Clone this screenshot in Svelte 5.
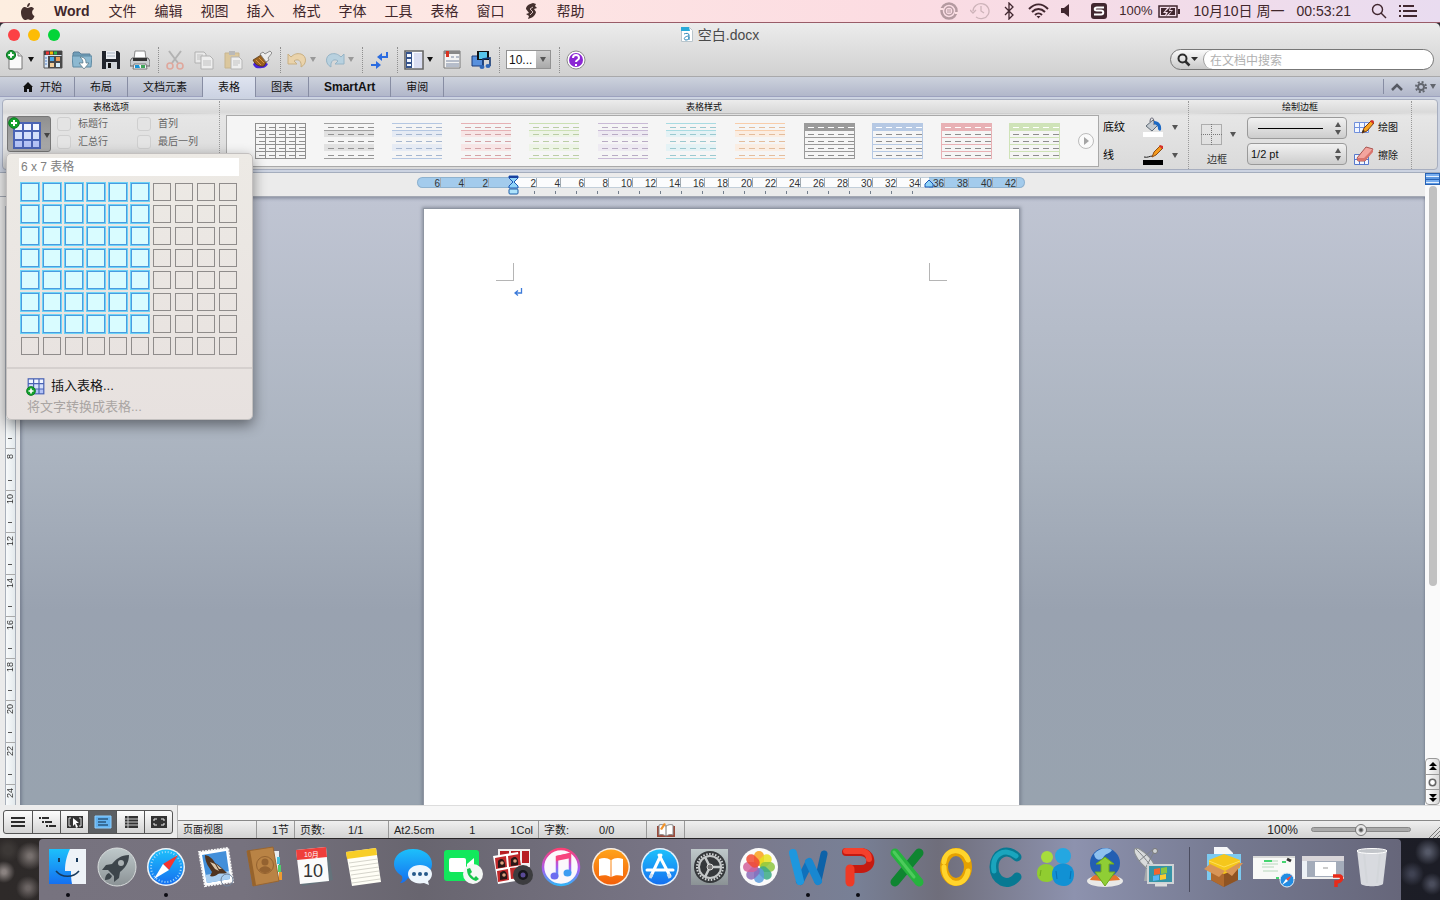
<script>
  const menus = ['文件', '编辑', '视图', '插入', '格式', '字体', '工具', '表格', '窗口'];
  const tabs = ['开始', '布局', '文档元素', '表格', '图表', 'SmartArt', '审阅'];
  const options = ['标题行', '首列', '汇总行', '最后一列'];

  const styles = [
    { kind: 'grid', line: '#8f8f8f', band: 'none' },
    { kind: 'band', line: '#a0a0a0', band: '#e1e1e1' },
    { kind: 'band', line: '#b4c7e2', band: '#e6ebf4' },
    { kind: 'band', line: '#e6b1b4', band: '#f7e6e6' },
    { kind: 'band', line: '#cbe0b3', band: '#edf4e6' },
    { kind: 'band', line: '#c9bad6', band: '#eeeaf2' },
    { kind: 'band', line: '#a8dbe2', band: '#e4f2f5' },
    { kind: 'band', line: '#f8cdaa', band: '#faede2' },
    { kind: 'head', line: '#9b9b9b', band: '#9b9b9b' },
    { kind: 'head', line: '#b6c9e4', band: '#b6c9e4' },
    { kind: 'head', line: '#e8b1b5', band: '#e8b1b5' },
    { kind: 'head', line: '#cfe3b8', band: '#cfe3b8' }
  ];

  const rulerMarks = Array.from({ length: 25 }, (_, i) => (i - 3) * 2);
  const sideMarks = Array.from({ length: 13 }, (_, i) => i * 2);

  const apps = [
    'finder', 'launchpad', 'safari', 'mail', 'contacts', 'calendar', 'notes', 'messages', 'facetime',
    'photobooth', 'itunes', 'ibooks', 'appstore', 'settings', 'photos', 'word', 'powerpoint', 'excel',
    'outlook', 'communicator', 'messenger', 'docconn', 'rdc'
  ];
  const stacks = ['downloads', 'win-safari', 'win-ppt', 'trash'];
  const running = ['finder', 'safari', 'word', 'powerpoint'];
  const petals = ['#f9a01b', '#e6e01c', '#8dc63f', '#3aa984', '#5b9bdb', '#8a6bb8', '#d1609a', '#f04a32'];
  const views = ['draft', 'outline', 'publish', 'print', 'notebook', 'full'];

  let cols = $state(6);
  let rows = $state(7);
  let activeTab = $state('表格');
  let activeView = $state('print');
  let zoom = $state(50);
</script>

{#snippet arrow()}
  <svg class="arrow" width="6" height="5" viewBox="0 0 6 5"><path d="M0 0h6L3 5z" fill="currentColor" /></svg>
{/snippet}

{#snippet tool(name)}
  <svg width="20" height="20" viewBox="0 0 20 20" fill="none">
    {#if name === 'new'}
      <path d="M4 2h9l4 4v13H4z" fill="#fafafa" stroke="#777" />
      <path d="M13 2v4h4" fill="#ddd" stroke="#888" />
      <circle cx="6" cy="5" r="4.6" fill="#1b9a36" stroke="#0b7422" />
      <path d="M6 2.3v5.4M3.3 5h5.4" stroke="#fff" stroke-width="2" />
    {:else if name === 'gallery'}
      <path d="M1 1h18v17H1z" fill="#d9e6f5" stroke="#555" />
      <path d="M1 1h18v4H1z" fill="#444" />
      <path d="M3 3h3" stroke="#e33" stroke-width="3" /><path d="M7 3h3" stroke="#f6b400" stroke-width="3" /><path d="M11 3h3" stroke="#2db84b" stroke-width="3" />
      <path d="M5 6h14v12H5z" fill="#4a4a4a" />
      <path d="M7 7h4v4H7z" fill="#49a7e8" /><path d="M13 7h4v4h-4z" fill="#e99a55" />
      <path d="M7 13h4v4H7z" fill="#f2cf9c" /><path d="M13 13h4v4h-4z" fill="#d5eefc" />
      <path d="M2 8h2M2 11h2M2 14h2" stroke="#5b86c8" />
    {:else if name === 'open'}
      <path d="M1 3l1-1h5l2 2h9v3H1z" fill="#6f9db8" stroke="#5b7f98" />
      <path d="M0 6h20l-1 11H1z" fill="#8db9d1" stroke="#5f8aa3" />
      <path d="M8 7c5 0 6 3 6 6h3l-5 6-5-6h4c0-3-1-4-3-6z" fill="#fff" stroke="#54717f" stroke-width=".7" />
    {:else if name === 'save'}
      <path d="M1 1h16l2 2v16H1z" fill="#20242c" />
      <path d="M5 1h10v8H5z" fill="#eceff3" /><path d="M6 3h8M6 6h8" stroke="#a8b4c4" />
      <path d="M5 12h11v7H5z" fill="#cfd4da" /><path d="M7 13h3v5H7z" fill="#111" />
    {:else if name === 'printer'}
      <path d="M5 1h10l1 8H4z" fill="#fff" stroke="#888" />
      <path d="M2 8h16l2 3v5H0v-5z" fill="#c9ccd0" stroke="#666" /><path d="M3 8h14v3H3z" fill="#333" />
      <path d="M4 14h12l1 5H3z" fill="#f4f8fb" stroke="#777" /><path d="M5 15h4l1 3H5z" fill="#1793d6" /><path d="M11 15h4v3h-4z" fill="#3fa55a" />
    {:else if name === 'cut'}
      <path d="M4 1l9 12M16 1L7 13" stroke="#b3b3b3" stroke-width="2" />
      <circle cx="5" cy="16" r="3" stroke="#dfa79c" stroke-width="1.6" /><circle cx="15" cy="16" r="3" stroke="#dfa79c" stroke-width="1.6" />
    {:else if name === 'copy'}
      <path d="M1 2h9l2 2v9H1z" fill="#e9e9e9" stroke="#b1b1b1" /><path d="M3 5h6M3 7h6M3 9h4" stroke="#c0c0c0" />
      <path d="M7 6h9l3 3v10H7z" fill="#eee" stroke="#b1b1b1" /><path d="M9 11h8M9 13h8M9 15h8" stroke="#c0c0c0" />
    {:else if name === 'paste'}
      <path d="M2 3h14v15H2z" fill="#dbc79d" stroke="#c7b58f" /><path d="M6 1h6v4H6z" fill="#b9b9b9" />
      <path d="M8 7h8l3 3v9H8z" fill="#eee" stroke="#b5b5b5" /><path d="M10 11h7M10 13h7M10 15h5" stroke="#c3c3c3" />
    {:else if name === 'brush'}
      <path d="M1 14c1 4 5 5 9 4 3 0 5-2 6-4-5-3-9-5-15 0z" fill="#4824d8" />
      <path d="M1 10l8-5 6 6-3 5C8 17 3 15 1 10z" fill="#9a6220" stroke="#4c2d0b" stroke-width=".7" /><path d="M4 10l5 5M7 8l5 5" stroke="#d9983f" />
      <path d="M8 4l3-2 2 2 5-3 2 2-4 5 1 2-3 2z" fill="#ececec" stroke="#777" stroke-width=".8" />
    {:else if name === 'undo'}
      <path d="M1 4v10h9l-3-3c4-3 8 0 7 6 6-3 6-11 0-13-4-1-7 0-10 3z" fill="#ead3ab" stroke="#c9b083" />
    {:else if name === 'redo'}
      <path d="M19 4v10h-9l3-3c-4-3-8 0-7 6-6-3-6-11 0-13 4-1 7 0 10 3z" fill="#b8d1df" stroke="#96b4c6" />
    {:else if name === 'marks'}
      <path d="M18 2v5h-5M2 15h5" stroke="#2c6ce0" stroke-width="2" /><path d="M7 11l5 4-5 4zM13 3L8 7l5 4z" fill="#2c6ce0" />
    {:else if name === 'sidebar'}
      <path d="M1 1h18v18H1z" fill="#f7f9ff" stroke="#666" stroke-width="1.6" /><path d="M2 2h6v16H2z" fill="#35538c" /><path d="M3 4h4v3H3zM3 9h4v3H3zM3 14h4v2H3z" fill="#f5f8ff" /><path d="M10 3h8v15h-8z" fill="#dadef2" />
    {:else if name === 'toolbox'}
      <path d="M2 1h16v17H2z" fill="#f3f3f3" stroke="#777" /><path d="M2 1h16v3H2z" fill="#888" /><path d="M4 1h3v6H4z" fill="#d9321f" />
      <path d="M9 7h3M14 7h3M4 11h13M4 14h13M4 16h13" stroke="#7886a0" />
    {:else if name === 'media'}
      <path d="M1 6h11v10H1z" fill="#5890dd" stroke="#1b3b7a" /><path d="M6 1h12v9H6z" fill="#111" /><path d="M8 2h8v7H8z" fill="#56c4ea" />
      <path d="M12 17V9l7-1v8" stroke="#163a74" stroke-width="1.6" /><ellipse cx="11" cy="17" rx="2.5" ry="2" fill="#2f67b8" /><ellipse cx="17" cy="16" rx="2.5" ry="2" fill="#2f67b8" />
    {:else if name === 'help'}
      <circle cx="10" cy="10" r="9" fill="#fff" stroke="#8d8d8d" /><circle cx="10" cy="10" r="7" fill="#8b27d4" />
      <path d="M7 8c0-4 6-4 6 0 0 2-3 2-3 4M10 14v2" stroke="#fff" stroke-width="2" />
    {/if}
  </svg>
{/snippet}

{#snippet toolButton(name, label, off = false)}
  <button class="tool" aria-label={label} disabled={off}>{@render tool(name)}</button>
{/snippet}

{#snippet dropTool(name, label, off = false)}
  <button class="tool drop" aria-label={label} disabled={off}>{@render tool(name)}{@render arrow()}</button>
{/snippet}

{#snippet tableIcon(size)}
  <svg width={size} height={size} viewBox="0 0 30 30">
    <path d="M1 2h28v27H1z" fill="#4a63b4" />
    <path d="M3 4h7v6H3zM12 4h7v6h-7zM21 4h6v6h-6z" fill="#f1f5ff" />
    <path d="M3 12h7v7H3zM12 12h7v7h-7zM21 12h6v7h-6z" fill="#d5e0fb" />
    <path d="M3 21h7v6H3zM12 21h7v6h-7zM21 21h6v6h-6z" fill="#b4c3f6" />
  </svg>
{/snippet}

{#snippet plus()}
  <svg class="plus" width="12" height="12" viewBox="0 0 12 12">
    <circle cx="6" cy="6" r="5.3" fill="#12a02c" stroke="#087a1c" /><path d="M6 3v6M3 6h6" stroke="#fff" stroke-width="2" />
  </svg>
{/snippet}

{#snippet thumb(s)}
  <svg width="51" height="36" viewBox="0 0 51 36" fill="none" shape-rendering="crispEdges">
    {#if s.kind === 'grid'}
      <path d="M.5.5h50v35H.5zM0 7.5h51M0 14.5h51M0 21.5h51M0 28.5h51M10.5 0v36M20.5 0v36M30.5 0v36M40.5 0v36" stroke={s.line} />
      <path d="M4 4.5h47M4 11.5h47M4 18.5h47M4 25.5h47M4 32.5h47" stroke={s.line} stroke-dasharray="6 4" />
    {:else if s.kind === 'band'}
      <path d="M0 7h50v7H0zM0 21h50v7H0z" fill={s.band} />
      <path d="M0 .5h50M0 7.5h50M0 35.5h50" stroke={s.line} />
      <path class="dash" d="M4 4.5h46M4 11.5h46M4 18.5h46M4 25.5h46M4 32.5h46" stroke={s.line} stroke-dasharray="6 4" />
    {:else}
      <path d="M.5.5h50v35H.5zM0 14.5h51M0 21.5h51M0 28.5h51" stroke={s.line} />
      <path d="M0 0h51v8H0z" fill={s.band} />
      <path d="M4 4.5h47" stroke="#fff" stroke-dasharray="6 4" />
      <path d="M4 11.5h46M4 18.5h46M4 25.5h46M4 32.5h46" stroke="#8e8e8e" stroke-dasharray="6 4" />
    {/if}
  </svg>
{/snippet}

{#snippet viewIcon(name)}
  <svg width="18" height="14" viewBox="0 0 18 14" fill="none" stroke="#2c2c2c" stroke-width="2">
    {#if name === 'draft'}
      <path d="M2 3h14M2 7h14M2 11h14" />
    {:else if name === 'outline'}
      <path d="M1 3h2M4 3h7M4 7h2M7 7h7M8 11h2M11 11h7" />
    {:else if name === 'publish'}
      <path d="M1 1h16v12H1z" fill="#333" stroke="none" /><path d="M5 3H3v8h2M13 3h2v8h-2" stroke="#ddd" stroke-width="1" /><path d="M7 3l6 5H10l2 4-2 1-1-4-2 2z" fill="#fff" stroke="none" />
    {:else if name === 'print'}
      <path d="M1 1h16v12H1z" fill="#62b2f0" stroke="#8fd0ff" stroke-width="1" /><path d="M4 4h10M4 7h8M4 10h10" stroke="#0f2942" stroke-width="1" />
    {:else if name === 'notebook'}
      <path d="M3 1h13v12H3z" fill="#333" stroke="none" /><path d="M2 4h14M2 7h14M2 10h14M6 1v12" stroke="#ccc" stroke-width="1" />
    {:else}
      <path d="M1 1h16v12H1z" fill="#333" stroke="none" /><path d="M4 6V4h3M11 4h3v2M14 8v2h-3M7 10H4V8" stroke="#eee" stroke-width="1" />
    {/if}
  </svg>
{/snippet}

{#snippet app(name)}
  <svg width="40" height="40" viewBox="0 0 40 40" fill="none">
    {#if name === 'finder'}
      <rect x="1" y="2" width="37" height="35" fill="url(#blue)" />
      <path d="M22 2h16v35H24c-1-5-1-8-1-13h-6c0-9 2-16 5-22z" fill="#eef3f8" />
      <path d="M11 11v4M29 11v4" stroke="#173a5c" stroke-width="2" /><path d="M8 24c6 7 17 7 23 0" stroke="#173a5c" stroke-width="1.6" />
    {:else if name === 'launchpad'}
      <circle cx="20" cy="20" r="19" fill="url(#steel)" stroke="#d9dddd" />
      <path d="M32 8c-8 0-13 4-17 9l-6 1-4 5 6 0 6 6 0 6 5-4 1-6c5-4 9-9 9-17zM12 26c-3 1-4 4-4 7 3 0 6-1 7-4z" fill="#3d454b" />
      <circle cx="24" cy="16" r="3" fill="#aab1b3" />
    {:else if name === 'safari'}
      <circle cx="20" cy="20" r="19" fill="#f2f5f8" /><circle cx="20" cy="20" r="17.5" fill="url(#blue)" />
      <circle cx="20" cy="20" r="15" stroke="#9ed6fb" stroke-width="2" stroke-dasharray="1 2" />
      <path d="M32 8L17 17l6 6z" fill="#f5342e" /><path d="M8 32l9-15 6 6z" fill="#fff" />
    {:else if name === 'mail'}
      <path d="M3 5l29-4 5 34-28 4z" fill="#fff" stroke="#f5f5f5" stroke-width="2" stroke-dasharray="2 1" />
      <path d="M6 8l24-4 4 28-23 4z" fill="#438fd9" /><path d="M9 28l24-4 1 8-23 4z" fill="#a9cef0" />
      <path d="M9 8c5 1 8 4 10 8 4 2 8 6 12 10-4 1-7 0-9 1-2 2-6 3-8 2l2-4c-3-5-7-9-7-17z" fill="#4f3420" /><path d="M14 15l5 2 4 7-4-2zM20 17l6 5-3 0z" fill="#dac7aa" /><circle cx="31" cy="33" r="6" stroke="#70829a" />
    {:else if name === 'contacts'}
      <path d="M28 4h6v28h-6z" fill="#e9edf0" /><path d="M32 10h3v7h-3z" fill="#49bfd9" /><path d="M33 18h3v7h-3z" fill="#4fce6e" /><path d="M34 25h3v8h-3z" fill="#ef9b32" />
      <path d="M2 4L28 0l6 34-26 5z" fill="#b98345" stroke="#996631" /><path d="M2 4l3-1 6 35-3 1z" fill="#96632c" />
      <circle cx="20" cy="18" r="8.5" stroke="#946230" /><circle cx="20" cy="15" r="3.5" fill="#946230" /><path d="M14 23c2-5 10-5 12 0-4 4-8 4-12 0z" fill="#946230" />
    {:else if name === 'calendar'}
      <path d="M3 6l30-4 5 31-31 6z" fill="#64737b" /><path d="M1 3l30-3 3 34-29 3z" fill="#fbfbfb" /><path d="M1 3l30-3 1 10L2 13z" fill="#ef3e3b" />
      <text x="9" y="10" font-size="7" fill="#fff">10月</text><text x="8" y="30" font-size="18" fill="#333">10</text>
    {:else if name === 'notes'}
      <path d="M2 5l30-4 5 34-29 4z" fill="#fffef6" /><path d="M2 5l30-4 1 7L3 12z" fill="#f8ce26" />
      <path d="M5 16l29-4M6 20l28-4M6 24l29-4M7 28l28-4M7 32l29-4M8 36l28-4" stroke="#d6d5cc" />
    {:else if name === 'messages'}
      <path d="M20 2c12 0 19 7 19 15S32 32 20 32c-2 0-4 0-5-1-2 3-5 5-8 5 2-2 3-4 2-7-5-3-8-7-8-12C1 9 8 2 20 2z" fill="url(#blue)" />
      <path d="M27 18c7 0 12 4 12 9 0 3-2 6-4 7l1 4-5-2c-9 2-16-3-16-9 0-5 5-9 12-9z" fill="#eef6fd" />
      <circle cx="21" cy="27" r="2" fill="#265a8b" /><circle cx="27" cy="27" r="2" fill="#265a8b" /><circle cx="33" cy="27" r="2" fill="#265a8b" />
    {:else if name === 'facetime'}
      <rect x="1" y="3" width="35" height="31" rx="3" fill="#12e85c" /><rect x="6" y="11" width="17" height="14" rx="2" fill="#fff" /><path d="M24 17l7-6v14l-7-5z" fill="#fff" />
      <circle cx="30" cy="27" r="10" fill="#f4f7f5" /><path d="M24 22l3-1 2 4-2 2 4 4 2-2 3 3-3 2c-6-2-9-6-9-12z" fill="#17c44b" />
    {:else if name === 'photobooth'}
      <path d="M6 2h32v18H6z" fill="#f1eeee" /><path d="M8 4h9v12H8zM19 4h9v10h-9zM30 4h7v12h-7z" fill="#b71d22" />
      <path d="M1 9l25-4 4 28-24 4z" fill="#fff" /><path d="M3 11l11-2 1 11-11 2zM16 9l11-2 2 11-12 2zM5 24l11-2 1 11-11 2zM18 21l10-1 1 11-10 1z" fill="#c0292b" />
      <path d="M6 14c4-5 8 0 7 6l-7 1zM19 12c5-5 8 0 7 6l-7 1zM8 26c5-5 8 0 7 6l-7 1z" fill="#2a1717" /><circle cx="10" cy="16" r="1.800" fill="#dba07e" /><circle cx="23" cy="14" r="1.800" fill="#dba07e" /><circle cx="12" cy="28" r="1.800" fill="#dba07e" />
      <circle cx="31" cy="28" r="10" fill="#3c3c3f" /><circle cx="31" cy="28" r="5" fill="#17171c" /><circle cx="31" cy="28" r="2.5" fill="#5a4a97" />
    {:else if name === 'itunes'}
      <circle cx="20" cy="20" r="18" fill="#fbf8fc" stroke="url(#tune)" stroke-width="2.5" />
      <path d="M16 30V10l13-3v19" stroke="url(#tune)" stroke-width="2.5" /><path d="M15 9l15-3v5l-15 3z" fill="#f7457e" /><ellipse cx="13.500" cy="29" rx="4" ry="3.500" fill="#6d6df0" /><ellipse cx="26.500" cy="26" rx="4" ry="3.500" fill="#3d9df2" />
    {:else if name === 'ibooks'}
      <circle cx="20" cy="20" r="19" fill="#f7efe7" /><circle cx="20" cy="20" r="17.5" fill="url(#orange)" />
      <path d="M8 12c5-2 9-1 11.500 1v17c-3-2-7-2-11.500-1zM32 12c-5-2-9-1-11.500 1v17c3-2 7-2 11.500-1z" fill="#fff" />
    {:else if name === 'appstore'}
      <circle cx="20" cy="20" r="19" fill="#e6f1fa" /><circle cx="20" cy="20" r="17.5" fill="url(#blue)" />
      <path d="M21 8L11 29M19 8l11 21M7 23h26" stroke="#fff" stroke-width="3" stroke-linecap="round" /><path d="M12 27l-2 4M28 27l2 4" stroke="#cde" stroke-width="3" />
    {:else if name === 'settings'}
      <rect x="1" y="2" width="37" height="36" fill="url(#steel)" /><circle cx="20" cy="20" r="16" fill="#35383b" />
      <circle cx="20" cy="20" r="13" stroke="#d3d6d7" stroke-width="2" stroke-dasharray="1.500 1.500" /><circle cx="20" cy="20" r="11" stroke="#c3c6c7" stroke-width="2" />
      <path d="M20 20h11M20 20l-5-10M20 20l-5 10" stroke="#c5c9ca" stroke-width="2.500" /><circle cx="20" cy="20" r="3" fill="#777" stroke="#ddd" />
    {:else if name === 'photos'}
      <circle cx="20" cy="20" r="19" fill="#fafafa" />
      {#each petals as color, i}
        <rect x="15" y="4" width="10" height="15" rx="5" fill={color} fill-opacity=".85" transform="rotate({i * 45} 20 20)" />
      {/each}
    {:else if name === 'word'}
      <path d="M30 34l6-27" stroke="#0d62a8" stroke-width="7" stroke-linecap="round" /><path d="M12 34l9-18" stroke="#0f70bb" stroke-width="8" stroke-linecap="round" />
      <path d="M21 15l9 19" stroke="#1887d0" stroke-width="8" stroke-linecap="round" /><path d="M5 6l7 28" stroke="#1e97de" stroke-width="8" stroke-linecap="round" />
    {:else if name === 'powerpoint'}
      <path d="M8 5h15c12 1 13 17 0 17h-8" stroke="#c51a10" stroke-width="8" stroke-linecap="round" /><path d="M8 4h16c4 1 7 3 7 8" stroke="#f5402c" stroke-width="6" stroke-linecap="round" /><path d="M12 22v13" stroke="#ee3a25" stroke-width="9" stroke-linecap="round" />
    {:else if name === 'excel'}
      <path d="M32 6L8 35" stroke="#0f8531" stroke-width="9" stroke-linecap="round" /><path d="M8 6l24 29" stroke="#26b33e" stroke-width="9" stroke-linecap="round" /><path d="M7 5l20 25" stroke="#4dcb5c" stroke-width="3" stroke-linecap="round" />
    {:else if name === 'outlook'}
      <ellipse cx="20" cy="20" rx="12" ry="15" stroke="#e5a100" stroke-width="8" /><path d="M8 15C9 1 28 0 32 13M8 20c0 20 21 22 24 4" stroke="#ffd42c" stroke-width="5" stroke-linecap="round" />
    {:else if name === 'communicator'}
      <path d="M31 10C22 0 8 6 8 20s14 21 23 10" stroke="#087992" stroke-width="9" stroke-linecap="round" /><path d="M30 9C19 0 5 7 8 24" stroke="#1aa5bd" stroke-width="5" stroke-linecap="round" />
    {:else if name === 'messenger'}
      <circle cx="12" cy="10" r="6" fill="#a7dd3c" /><path d="M2 26c0-12 18-12 18 0 0 5-3 9-8 9-6 0-10-3-10-9z" fill="#91cd30" /><path d="M5 29l1-6" stroke="#6fa71d" />
      <circle cx="28" cy="9" r="8" fill="#24a7e1" /><path d="M17 27c0-14 22-14 22 0 0 6-3 12-10 12-8 0-12-5-12-12z" fill="#1191d4" /><path d="M22 32l-1-8M35 32l1-8" stroke="#0b6fb0" />
    {:else if name === 'docconn'}
      <ellipse cx="20" cy="34" rx="18" ry="6" fill="#e9e9e7" /><path d="M5 33c2-4 6-6 11-7l2 8zM35 33c-2-4-6-6-11-7l-2 8z" fill="#e3742c" />
      <circle cx="20" cy="16" r="15" fill="#235fb2" /><path d="M9 7c5-6 13-7 18-4-2 4-7 3-9 8-4 3-8 2-9-4z" fill="#8ec1ef" /><path d="M16 25v-8h-5l9-7 9 7h-5v8h6L20 39 10 25z" fill="#8fce35" stroke="#6ea81d" />
    {:else if name === 'rdc'}
      <path d="M12 20l-2 14h10v-3z" fill="#a6a9ab" /><ellipse cx="11" cy="13" rx="5" ry="15" fill="#d9dbdc" stroke="#8b8f92" transform="rotate(-42 11 13)" /><path d="M2 2c4 4 12 12 18 22M5 14l13-11M12 20l8-15" stroke="#7f8386" /><circle cx="21" cy="4" r="2.500" fill="#cfd2d4" stroke="#777" />
      <rect x="13" y="17" width="27" height="20" fill="#cfd3d5" /><rect x="15" y="19" width="23" height="16" fill="#3694a7" />
      <path d="M20 22l6-1v6l-6 1z" fill="#f1652f" /><path d="M27 21l6-1v6l-6 1z" fill="#8bc53f" /><path d="M19 29l6-1v5l-6 1z" fill="#56b4f3" /><path d="M26 28l6-1v5l-6 1z" fill="#fbcb31" /><path d="M21 38h12" stroke="#ddd" stroke-width="3" />
    {:else if name === 'downloads'}
      <path d="M10 0h13l6 6v14H10z" fill="#f6f7f9" /><path d="M3 7h34v26H3z" fill="#7ccaf0" />
      <path d="M7 20h27v13l-14 7-13-7z" fill="#8f5423" /><path d="M20 26v14L7 33V19z" fill="#b06a2e" /><path d="M20 7l16 6v8l-16 6-15-6v-8z" fill="#f5c71b" /><path d="M5 14l15 6 16-6" stroke="#ffe05a" />
      <path d="M0 22l6-5 15 7-6 6zM39 16l-4 0-14 8 7 5z" fill="#d89557" />
    {:else if name === 'win-safari'}
      <path d="M-1 9h42v23H-1z" fill="#f8f9f7" /><path d="M-1 10h42" stroke="#bbb" /><path d="M10 14h14M8 17h16M8 20h12M9 24h15" stroke="#b7d8bc" /><path d="M10 14h8M28 15h4M22 31h3" stroke="#45d570" stroke-width="2" /><path d="M33 12l4 2" stroke="#333" stroke-width="3" />
      <circle cx="33" cy="33" r="7" fill="#218ce2" stroke="#e4edf4" /><path d="M38 28l-6 4 2 2z" fill="#f43" /><path d="M28 38l4-6 2 2z" fill="#fff" />
    {:else if name === 'win-ppt'}
      <path d="M-1 9h42v23H-1z" fill="#a4acba" /><path d="M-1 9h42v5H-1z" fill="#d8d5d9" /><path d="M-1 14h5v18h-5z" fill="#edf1f6" /><path d="M12 15h21v14H12z" fill="#fff" /><path d="M20 21h5" stroke="#999" /><path d="M-1 31h42" stroke="#eee" stroke-width="2" />
      <path d="M30 29h7c3 1 2 6-4 6v5" stroke="#e92a19" stroke-width="3.500" />
    {:else if name === 'trash'}
      <path d="M5 3h30l-4 34c-3 3-19 3-22 0z" fill="#e2e4e7" fill-opacity=".92" /><path d="M12 6l3 30M28 6l-3 30" stroke="#d3d6da" stroke-width="2" /><ellipse cx="20" cy="4" rx="15" ry="2.500" fill="#c3c6cb" stroke="#fff" />
    {/if}
  </svg>
{/snippet}

<!-- shared gradients for the dock icons -->
<svg class="defs" width="0" height="0" aria-hidden="true">
  <defs>
    <linearGradient id="blue" x1="0" y1="0" x2="0" y2="1"><stop offset="0" stop-color="#1dc0fb" /><stop offset="1" stop-color="#1570f0" /></linearGradient>
    <linearGradient id="steel" x1="0" y1="0" x2="0" y2="1"><stop offset="0" stop-color="#bfc9cb" /><stop offset="1" stop-color="#8b9295" /></linearGradient>
    <linearGradient id="orange" x1="0" y1="0" x2="0" y2="1"><stop offset="0" stop-color="#ffa31a" /><stop offset="1" stop-color="#f4600a" /></linearGradient>
    <linearGradient id="tune" x1="0" y1="0" x2="0" y2="1"><stop offset="0" stop-color="#fb3f74" /><stop offset=".55" stop-color="#a95af0" /><stop offset="1" stop-color="#33b4f7" /></linearGradient>
  </defs>
</svg>

<div class="desktop">
  <header class="menubar">
    <nav class="menus" aria-label="Menu bar">
      <svg width="15" height="18" viewBox="0 0 15 18" fill="#44302e"><path d="M10 1c0 2-1 4-3 4 0-2 1-4 3-4zM7.500 6C9 6 9.500 5 11 5c1 0 2.500.500 3 2-3 2-2 6 .500 7-.7 2-2 4-3.500 4-1 0-2-.8-3-.8s-2 .8-3 .8c-2 0-4-4-4-7.500S3 5 5 5c1 0 2 1 2.500 1z" /></svg>
      <button class="app-name">Word</button>
      {#each menus as menu}
        <button>{menu}</button>
      {/each}
      <svg width="16" height="16" viewBox="0 0 16 16" fill="#44302e"><path d="M10 0l3 1-1 2 2 2-3 1 2 3c-1 4-4 6-8 7l1-3-3-2 3-1-3-4c0-3 3-5 7-6z" /><path d="M10 4L7 6l3 3-3 3" stroke="#fde5e5" fill="none" stroke-width=".8" /></svg>
      <button>帮助</button>
    </nav>
    <div class="status-items">
      <svg width="18" height="18" viewBox="0 0 18 18" fill="none"><circle cx="9" cy="9" r="7.500" stroke="#b49aa0" stroke-width="2.500" /><circle cx="9" cy="9" r="4" stroke="#b49aa0" stroke-width="1.500" /><path d="M0 7h3M15 11h3" stroke="#fbdfe2" stroke-width="2" /><path d="M7 8h4M7 10h4" stroke="#b49aa0" /></svg>
      <svg width="20" height="18" viewBox="0 0 20 18" fill="none" stroke="#cdb3b9" stroke-width="1.300"><path d="M3 9a8 7.500 0 1 1 3 6M0 8l3 3 3-3M11 4v5l3 2" /></svg>
      <svg width="14" height="18" viewBox="0 0 14 18" fill="none" stroke="#41272f" stroke-width="1.300"><path d="M3 5l8 8-4 4V1l4 4-8 8" /></svg>
      <svg width="21" height="16" viewBox="0 0 21 16" fill="none" stroke="#41272f" stroke-width="2"><path d="M1 6c6-6 13-6 19 0M4 9c4-4 9-4 13 0M7 12c2-2 5-2 7 0" /><path d="M8.500 13L10.500 15.500l2-2.500z" fill="#41272f" stroke="none" /></svg>
      <svg width="18" height="16" viewBox="0 0 18 16" fill="#41272f"><path d="M0 5h3l5-4v13l-5-4H0z" /></svg>
      <svg width="16" height="16" viewBox="0 0 16 16" fill="none"><rect width="16" height="16" rx="3" fill="#41272f" /><path d="M13 4.500H6c-3 0-3 3 0 3h4c3 0 3 4 0 4H3" stroke="#fff" stroke-width="2" /></svg>
      <span class="battery">100%
        <svg width="23" height="13" viewBox="0 0 23 13" fill="none"><path d="M1 1h18v11H1z" stroke="#41272f" stroke-width="1.500" /><path d="M3 3h6L5 8h3l-1 2H3zM13 3h4v7h-6l4-5h-3z" fill="#41272f" /><path d="M12 2L7 7h3l-2 4 6-5h-3z" fill="#41272f" /><path d="M21 4v5" stroke="#41272f" stroke-width="2" /></svg>
      </span>
      <span class="date">10月10日 周一</span>
      <span class="time">00:53:21</span>
      <svg width="16" height="16" viewBox="0 0 16 16" fill="none" stroke="#41272f" stroke-width="1.400"><circle cx="6.500" cy="6.500" r="5" /><path d="M10 10l5 5" /></svg>
      <svg width="18" height="12" viewBox="0 0 18 12" fill="none" stroke="#41272f" stroke-width="2"><path d="M0 1h2M4 1h11M0 6h2M4 6h14M0 11h2M4 11h14" /></svg>
    </div>
  </header>

  <main class="window">
    <div class="titlebar">
      <div class="lights">
        <button class="close" aria-label="关闭"></button>
        <button class="minimize" aria-label="最小化"></button>
        <button class="maximize" aria-label="缩放"></button>
      </div>
      <div class="title">
        <svg width="12" height="15" viewBox="0 0 12 15"><path d="M.5.5h8l3 3v11H.5z" fill="#fff" stroke="#b9c5cc" /><path d="M0 0h8l1 4H0z" fill="#29a9d8" /><path d="M3 7c2-1 5-1 5 1v5M8 9c-5 0-6 4-3 4 2 0 3-1 3-3" fill="none" stroke="#2c86b8" /></svg>
        空白.docx
      </div>
    </div>

    <div class="toolbar">
      <div class="group">
        {@render dropTool('new', '新建')}
        {@render toolButton('gallery', '模板')}
        {@render toolButton('open', '打开')}
        {@render toolButton('save', '保存')}
        {@render toolButton('printer', '打印')}
      </div>
      <div class="group">
        {@render toolButton('cut', '剪切', true)}
        {@render toolButton('copy', '复制', true)}
        {@render toolButton('paste', '粘贴', true)}
        {@render toolButton('brush', '格式')}
      </div>
      <div class="group">
        {@render dropTool('undo', '撤消', true)}
        {@render dropTool('redo', '重复', true)}
      </div>
      <div class="group">{@render toolButton('marks', '显示标记')}</div>
      <div class="group">
        {@render dropTool('sidebar', '边栏')}
        {@render toolButton('toolbox', '工具箱')}
        {@render toolButton('media', '媒体')}
      </div>
      <div class="group">
        <span class="zoom-select">
          <select aria-label="缩放"><option>10...</option></select>
          <span class="zoom-arrow">{@render arrow()}</span>
        </span>
      </div>
      <div class="group">{@render toolButton('help', '帮助')}</div>

      <form class="search">
        <button type="button" aria-label="搜索选项">
          <svg width="22" height="14" viewBox="0 0 22 14" fill="none" stroke="#2d2d2d"><circle cx="5.500" cy="5.500" r="4" stroke-width="2" /><path d="M8.500 8.500l4 4" stroke-width="2.500" /><path d="M14 4h7l-3.500 4z" fill="#2d2d2d" stroke="none" /></svg>
        </button>
        <input type="search" aria-label="搜索" placeholder="在文档中搜索" />
      </form>
    </div>

    <div class="tabs">
      {#each tabs as tab, i}
        <button class:active={tab === activeTab} class:latin={tab === 'SmartArt'} onclick={() => (activeTab = tab)}>
          {#if i === 0}
            <svg width="10" height="10" viewBox="0 0 10 10"><path d="M5 0l5 5H9v5H6V7H4v3H1V5H0z" fill="#111" /></svg>
          {/if}
          {tab}
        </button>
      {/each}
      <div class="tab-tools">
        <button aria-label="折叠"><svg width="12" height="8" viewBox="0 0 12 8"><path d="M1 7l5-5 5 5" fill="none" stroke="#565a63" stroke-width="2.500" /></svg></button>
        <button aria-label="设置">
          <svg width="12" height="12" viewBox="0 0 12 12" fill="none" stroke="#62666e"><circle cx="6" cy="6" r="3" stroke-width="2" /><circle cx="6" cy="6" r="5" stroke-width="2" stroke-dasharray="2 1.930" /></svg>
          {@render arrow()}
        </button>
      </div>
    </div>

    <div class="ribbon-frame">
      <div class="ribbon">
        <section class="table-options">
          <h2>表格选项</h2>
          <div class="section-body">
            <div class="insert-wrap">
              <button class="insert-table" aria-label="新建表格">
                {@render tableIcon(30)}
                {@render plus()}
                {@render arrow()}
              </button>
              <div class="popup">
                <div class="size-label">{cols} x {rows} 表格</div>
                <div class="cells">
                  {#each { length: 80 } as _, i}
                    <button
                      class:on={i % 10 < cols && Math.floor(i / 10) < rows}
                      aria-label="{(i % 10) + 1} x {Math.floor(i / 10) + 1}"
                      onmouseenter={() => { cols = (i % 10) + 1; rows = Math.floor(i / 10) + 1; }}
                    ></button>
                  {/each}
                </div>
                <div class="commands">
                  <button class="insert-cmd"><span class="mini">{@render tableIcon(18)}{@render plus()}</span>插入表格...</button>
                  <button disabled>将文字转换成表格...</button>
                </div>
              </div>
            </div>
            <div class="checks">
              {#each options as option}
                <label><input type="checkbox" disabled />{option}</label>
              {/each}
            </div>
          </div>
        </section>

        <section class="table-styles">
          <h2>表格样式</h2>
          <div class="section-body">
            <div class="gallery">
              {#each styles as s}
                <button class="style" aria-label="样式">{@render thumb(s)}</button>
              {/each}
              <button class="more" aria-label="更多"><svg width="16" height="16" viewBox="0 0 16 16"><circle cx="8" cy="8" r="7.500" fill="#fafafa" stroke="#bbb" /><path d="M6 4l5 4-5 4z" fill="#a5a5a5" /></svg></button>
            </div>
            <div class="shading">
              <button>
                底纹
                <svg width="20" height="20" viewBox="0 0 20 20"><path d="M3 9l7-6 5 5-6 6z" fill="#c3cad0" stroke="#5e6a75" /><path d="M7 5c0-6 4-5 4 0v3" fill="none" stroke="#667" /><path d="M11 4c5 0 8 4 7 9-1 1-2 1-3-1 0-3-1-4-4-5z" fill="#1c69c4" /><path d="M0 15h20v5H0z" fill="#fff" /></svg>
                {@render arrow()}
              </button>
              <button>
                线
                <svg width="20" height="20" viewBox="0 0 20 20"><path d="M1 12c4 1 5-1 9-1" fill="none" stroke="#222" /><path d="M9 12l2-5 6-6 3 2-7 7z" fill="#f59a1c" stroke="#8d4c14" /><path d="M16 1l1-1 3 1v2l-1 1z" fill="#d6302a" /><path d="M0 15h20v5H0z" /></svg>
                {@render arrow()}
              </button>
            </div>
          </div>
        </section>

        <section class="borders">
          <h2>绘制边框</h2>
          <div class="section-body">
            <button class="border-btn">
              <span>
                <svg width="21" height="21" viewBox="0 0 21 21"><path d="M.5.5h20v20H.5zM10.500 0v21M0 10.500h21" fill="none" stroke="#777" stroke-dasharray="1 1" /></svg>
                {@render arrow()}
              </span>
              边框
            </button>
            <div class="selects">
              <span class="pick">
                <select class="line" aria-label="线型"><option></option></select>
                <svg width="6" height="13" viewBox="0 0 6 13"><path d="M3 0l3 5H0zM3 13l3-5H0z" fill="#555" /></svg>
              </span>
              <span class="pick">
                <select aria-label="粗细"><option>1/2 pt</option></select>
                <svg width="6" height="13" viewBox="0 0 6 13"><path d="M3 0l3 5H0zM3 13l3-5H0z" fill="#555" /></svg>
              </span>
            </div>
            <div class="draw">
              <button>
                <svg width="20" height="16" viewBox="0 0 20 16"><path d="M.5 2.500h14v10H.5zM5.500 2v11M10.500 2v11M0 7.500h15" fill="#f2f6ff" stroke="#7190dc" /><path d="M8 13l2-5 7-7 3 2-7 8z" fill="#f8a41f" stroke="#793c14" /><path d="M16 1l2-1 2 1-1 3z" fill="#d5302a" /><path d="M8 13l1-3 2 1z" fill="#222" /></svg>
                绘图
              </button>
              <button>
                <svg width="20" height="20" viewBox="0 0 20 20"><path d="M.5 8.500h14v10H.5zM5.500 8v11M10.500 8v11M0 13.500h15" fill="#f2f6ff" stroke="#5678cc" /><path d="M3 12L12 1l7 2-8 12H4z" fill="#f3a49e" stroke="#a8544f" /><path d="M3 12l7 0 9-9v3l-8 9H4z" fill="#d9746d" /></svg>
                擦除
              </button>
            </div>
          </div>
        </section>
        <div class="ribbon-end"></div>
      </div>
    </div>

    <div class="workspace">
      <div class="ruler-row">
        <div class="ruler">
          <div class="scale">
            {#each rulerMarks as mark}
              <span class:zero={mark === 0}>{mark === 0 ? '' : Math.abs(mark)}</span>
            {/each}
          </div>
          <svg class="indent" width="11" height="20" viewBox="0 0 11 20"><path d="M1 1h9v2L6 7l4 4v2H1v-2l4-4-4-4z" fill="#8fd3f8" stroke="#1a56b5" /><path d="M1 1h9v2H1z" fill="#173f9e" /><rect x="1" y="14" width="9" height="5" rx="1" fill="#aee3fb" stroke="#1d5fa8" /></svg>
          <svg class="indent right" width="10" height="9" viewBox="0 0 10 9"><path d="M5 1l4 4v3H1V5z" fill="#8fd3f8" stroke="#1a56b5" /></svg>
          <div class="ticks"></div>
        </div>
      </div>

      <div class="side">
        <div class="side-ruler">
          <div class="side-margin"></div>
          {#each sideMarks as mark}
            <div class="side-cell"><span>{mark || ''}</span></div>
          {/each}
        </div>
      </div>

      <div class="canvas">
        <article class="page">
          <div class="corners"><i class="left"></i><i class="right"></i></div>
          <svg class="return" width="9" height="9" viewBox="0 0 9 9"><path d="M7.500 0v5H2M4 2.500L1 5l3 2.500" fill="none" stroke="#3d7bd9" stroke-width="1.300" /></svg>
        </article>
      </div>

      <div class="scrollbar">
        <div class="split"></div>
        <div class="track"><div class="thumb"></div></div>
        <div class="browse">
          <button aria-label="上一页"><svg width="8" height="9" viewBox="0 0 8 9"><path d="M4 0l4 4H0zM4 4l4 4H0z" /></svg></button>
          <button aria-label="选择浏览对象"><svg width="9" height="9" viewBox="0 0 9 9"><circle cx="4.500" cy="4.500" r="3.200" fill="#fff" stroke="#666" stroke-width="1.600" /></svg></button>
          <button aria-label="下一页"><svg width="8" height="9" viewBox="0 0 8 9"><path d="M0 1h8L4 5zM0 5h8L4 9z" /></svg></button>
        </div>
      </div>
    </div>

    <footer class="bottom">
      <div class="views">
        <div class="view-group">
          {#each views as view}
            <button class:active={view === activeView} aria-label={view} onclick={() => (activeView = view)}>{@render viewIcon(view)}</button>
          {/each}
        </div>
      </div>
      <div class="status">
        <div class="hscroll"></div>
        <div class="fields">
          <span class="f-view">页面视图</span>
          <span class="f-section">1节</span>
          <span class="f-pages">页数:<b>1/1</b></span>
          <span class="f-pos">At2.5cm<b>1</b><b>1Col</b></span>
          <span class="f-words">字数:<b>0/0</b></span>
          <span class="f-book">
            <svg width="18" height="14" viewBox="0 0 18 14"><path d="M0 3h18v11H0z" fill="#9b4b3b" /><path d="M2 2c3-1 5 0 7 1 2-1 4-2 7-1v10c-3-1-5 0-7 1-2-1-4-2-7-1z" fill="#fff" stroke="#8a8a8a" /><path d="M9 3v10" stroke="#777" /><path d="M3 6l4-6 2 1-4 6z" fill="#f0932b" /></svg>
          </span>
          <label class="zoom">100%<input type="range" min="0" max="100" bind:value={zoom} /></label>
          <svg class="grip" width="12" height="12" viewBox="0 0 12 12"><path d="M1 12L12 1M5 12l7-7M9 12l3-3" stroke="#777" /></svg>
        </div>
      </div>
    </footer>
  </main>

  <div class="dock-area">
    <div class="dock">
      {#each apps as name}
        <div class="app" class:running={running.includes(name)}>{@render app(name)}</div>
      {/each}
      <div class="divider"></div>
      {#each stacks as name}
        <div class="app">{@render app(name)}</div>
      {/each}
    </div>
  </div>
</div>

<style>
  :global(body) {
    margin: 0;
  }

  .desktop {
    display: flex;
    flex-direction: column;
    height: 100vh;
    overflow: hidden;
    background: #2a2b33;
    color: #111;
    font-family: 'Liberation Sans', 'Noto Sans CJK SC', sans-serif;
    font-size: 11px;
    line-height: 16px;
  }

  .desktop * {
    box-sizing: border-box;
  }

  .defs {
    position: absolute;
  }

  svg {
    display: block;
    flex: none;
  }

  button {
    display: flex;
    align-items: center;
    padding: 0;
    border: 0;
    background: none;
    color: inherit;
    font: inherit;
    white-space: nowrap;
  }

  select,
  input {
    margin: 0;
    font: inherit;
    color: inherit;
    appearance: none;
    outline: none;
  }

  /* menu bar */
  .menubar {
    display: flex;
    justify-content: space-between;
    flex: none;
    height: 23px;
    padding: 0 23px 0 20px;
    border-bottom: 1px solid #995c68;
    background: linear-gradient(90deg, #fdeee0, #fde6e4 33%, #fcdce2 62%, #e9dcf0);
    color: #41272b;
    font-size: 14px;
  }

  .menus,
  .status-items {
    display: flex;
    align-items: center;
    gap: 18px;
  }

  .app-name {
    padding: 0 1px;
    font-weight: bold;
  }

  .status-items {
    gap: 12px;
  }

  .battery {
    display: flex;
    align-items: center;
    gap: 6px;
    font-size: 13px;
  }

  .time {
    margin-right: 8px;
  }

  .date,
  .time {
    white-space: nowrap;
  }

  /* window */
  .window {
    display: flex;
    flex-direction: column;
    flex: 1;
    min-height: 0;
    border-radius: 5px 5px 0 0;
    background: linear-gradient(#ececec, #d0d0d0 54px);
  }

  .titlebar {
    display: grid;
    grid-template-columns: 1fr auto 1fr;
    align-items: center;
    height: 23px;
    flex: none;
  }

  .lights {
    display: flex;
    gap: 8px;
    padding-left: 8px;
  }

  .lights button {
    width: 12px;
    height: 12px;
    border-radius: 50%;
  }

  .close {
    background: #fc4145;
  }

  .minimize {
    background: #fdbc05;
  }

  .maximize {
    background: #04d438;
  }

  .title {
    display: flex;
    align-items: center;
    gap: 5px;
    color: #4a4a4a;
    font-size: 14px;
  }

  .toolbar {
    display: flex;
    align-items: center;
    flex: none;
    height: 31px;
    padding: 0 6px 3px 5px;
    border-bottom: 1px solid #a9a9ab;
  }

  .group {
    display: flex;
    align-items: center;
    gap: 9px;
    height: 26px;
    padding: 0 8px 0 6px;
    border-left: 1px dotted #8f8f8f;
  }

  .group:first-child {
    padding-left: 0;
    border-left: 0;
  }

  .drop {
    gap: 3px;
  }

  .tool:disabled {
    color: #999;
  }

  .zoom-select {
    display: grid;
    width: 45px;
    height: 19px;
    border: 1px solid #929292;
    background: #fff;
  }

  .zoom-select select {
    grid-area: 1 / 1;
    padding: 0 0 0 2px;
    border: 0;
    background: none;
    font-size: 12px;
  }

  .zoom-arrow {
    display: flex;
    grid-area: 1 / 1;
    align-items: center;
    justify-content: center;
    justify-self: end;
    width: 14px;
    background: linear-gradient(#cfcfcf, #a9a9a9);
    color: #555;
    pointer-events: none;
  }

  .search {
    display: flex;
    width: 264px;
    height: 21px;
    margin-left: auto;
    border: 1px solid #777;
    border-radius: 11px;
    background: linear-gradient(#fafafa, #c9c9c9);
    overflow: hidden;
  }

  .search button {
    width: 32px;
    padding-left: 6px;
  }

  .search input {
    flex: 1;
    min-width: 0;
    padding: 2px 6px 0;
    border: 0;
    border-left: 1px solid #999;
    border-radius: 10px;
    background: #fff;
    font-size: 12px;
  }

  .search input::placeholder {
    color: #b0b0b0;
  }

  /* tabs */
  .tabs {
    display: flex;
    flex: none;
    height: 20px;
    border-bottom: 1px solid #9ca1be;
    background: linear-gradient(#cdd2dd, #b1b7ca);
  }

  .tabs > button {
    justify-content: center;
    gap: 7px;
    height: 20px;
    padding: 0 15px;
    border-right: 1px solid #878da3;
  }

  .tabs > button:first-child {
    padding: 0 12px 0 23px;
  }

  .tabs > .active {
    background: linear-gradient(#dfe4f0, #ccd3e3);
  }

  .tabs .latin {
    font-size: 12px;
    font-weight: bold;
  }

  .tab-tools {
    display: flex;
    margin: 2px 4px 2px auto;
    gap: 12px;
    padding-left: 7px;
    border-left: 1px solid #878da3;
    color: #62666e;
  }

  .tab-tools button {
    gap: 3px;
  }

  /* ribbon */
  .ribbon-frame {
    flex: none;
    padding: 2px;
    border-bottom: 1px solid #a4adbd;
    background: #ccd3e1;
  }

  .ribbon {
    display: flex;
    height: 71px;
    padding: 1px 0 0;
    border: 1px solid #a7aebf;
    border-radius: 4px;
    background: linear-gradient(#ececec, #d9d9d9 12px, #e6e6e6 16px, #dadada);
  }

  .ribbon section {
    display: flex;
    flex-direction: column;
  }

  h2 {
    margin: 0;
    height: 13px;
    border-bottom: 1px solid #c9c9c9;
    border-image: linear-gradient(90deg, transparent, #b5b5b5, transparent) 1;
    font-size: 9px;
    font-weight: normal;
    line-height: 12px;
    text-align: center;
  }

  .section-body {
    display: flex;
    flex: 1;
  }

  .table-options {
    width: 216px;
  }

  .insert-wrap {
    position: relative;
    padding: 2px 0 0 4px;
  }

  .insert-table {
    position: relative;
    gap: 2px;
    width: 44px;
    height: 36px;
    padding: 2px 3px 0 4px;
    border: 1px solid #777;
    border-radius: 3px;
    background: linear-gradient(#909090, #acacac);
    color: #444;
  }

  .plus {
    position: absolute;
    top: 0;
    left: 0;
  }

  .checks {
    display: grid;
    grid-template-columns: 80px auto;
    align-content: start;
    padding: 1px 0 0 6px;
    color: #666;
  }

  .checks label {
    display: flex;
    align-items: center;
    gap: 7px;
    height: 18px;
    font-size: 10px;
  }

  .checks input {
    width: 14px;
    height: 14px;
    border: 1px solid #cfcfcf;
    border-radius: 3px;
    background: #e4e4e4;
  }

  .table-styles {
    flex: 1;
    border-left: 1px dotted #999;
  }

  .gallery {
    display: flex;
    flex: 1;
    align-items: center;
    justify-content: space-between;
    margin: 1px 0 2px 6px;
    padding: 0 4px 0 28px;
    border: 1px solid #a9a9a9;
    background: #f5f5f5;
  }

  .dash {
    filter: brightness(0.92);
  }

  .shading {
    display: flex;
    flex-direction: column;
    gap: 8px;
    width: 89px;
    padding: 3px 10px 0 4px;
    color: #000;
  }

  .shading button {
    display: grid;
    grid-template-columns: 40px 29px auto;
    height: 20px;
    text-align: left;
  }

  .shading .arrow,
  .border-btn .arrow {
    color: #555;
  }

  .borders {
    width: 223px;
    border-left: 1px dotted #999;
  }

  .border-btn {
    flex-direction: column;
    align-items: flex-start;
    gap: 7px;
    width: 58px;
    padding: 10px 0 0 12px;
    color: #333;
    font-size: 10px;
    text-indent: 6px;
  }

  .border-btn span {
    display: flex;
    align-items: center;
    gap: 8px;
  }

  .selects {
    display: flex;
    flex-direction: column;
    gap: 4px;
    width: 100px;
    padding-top: 3px;
  }

  .pick {
    display: grid;
    align-items: center;
  }

  .pick select {
    grid-area: 1 / 1;
    width: 100%;
    height: 22px;
    padding: 0 3px;
    border: 1px solid #9a9a9a;
    border-radius: 4px;
    background: linear-gradient(#f1f1f1, #cdcdcd);
    font-size: 11px;
  }

  .pick .line {
    background:
      linear-gradient(#000, #000) 10px center / 65px 1px no-repeat,
      linear-gradient(#f1f1f1, #cdcdcd);
  }

  .pick svg {
    grid-area: 1 / 1;
    justify-self: end;
    margin-right: 6px;
    pointer-events: none;
  }

  .draw {
    display: flex;
    flex-direction: column;
    gap: 8px;
    padding: 4px 0 0 7px;
    font-size: 10px;
  }

  .draw button {
    gap: 4px;
    height: 20px;
  }

  .ribbon-end {
    width: 26px;
    border-left: 1px dotted #999;
  }

  /* table size popup */
  .popup {
    position: absolute;
    top: 39px;
    left: 3px;
    z-index: 10;
    width: 247px;
    padding: 4px 0 0;
    border: 1px solid #c3c0bf;
    border-radius: 5px;
    background: linear-gradient(#edeae5, #e7e1df);
    box-shadow: 0 5px 14px rgba(0, 0, 0, 0.45);
  }

  .size-label {
    width: 220px;
    height: 18px;
    margin-left: 12px;
    padding-left: 2px;
    background: #fff;
    color: #808080;
    font-size: 12px;
    line-height: 18px;
  }

  .cells {
    display: grid;
    grid-template-columns: repeat(10, 18px);
    gap: 4px;
    padding: 7px 14px 12px;
  }

  .cells button {
    height: 18px;
    border: 1px solid #8f8c8b;
  }

  .cells .on {
    border-color: #4a9be0;
    background: #d9fcff;
    box-shadow: 0 0 0 1px #6cd3f6;
  }

  .commands {
    padding: 6px 20px 2px;
    border-top: 2px solid #d5d0ce;
    font-size: 13px;
  }

  .commands button {
    height: 21px;
  }

  .commands button:disabled {
    color: #aaa5a3;
  }

  .insert-cmd {
    gap: 6px;
  }

  .mini {
    position: relative;
  }

  .mini .plus {
    top: 9px;
    left: -1px;
    width: 10px;
    height: 10px;
  }

  /* workspace */
  .workspace {
    display: grid;
    grid-template-columns: 20px 1fr 15px;
    grid-template-rows: 24px minmax(0, 1fr);
    flex: 1;
    min-height: 0;
    background: #ebebeb;
  }

  .ruler-row {
    grid-column: 1 / 3;
    padding: 4px 0 0 17px;
    border-bottom: 1px solid #a3a8b3;
  }

  .ruler {
    position: relative;
    width: 608px;
    margin: 0 auto;
  }

  .scale {
    display: flex;
    height: 11px;
    padding-right: 8px;
    border-radius: 6px;
    background: linear-gradient(90deg, #a3cbec 96px, #fbfcfd 96px, #fbfcfd 512px, #a3cbec 512px);
    box-shadow: inset 0 0 0 1px rgba(110, 140, 165, 0.4);
  }

  .scale span {
    width: 24px;
    height: 9px;
    margin-top: 1px;
    border-right: 1px solid #a4aab0;
    color: #333;
    font-size: 10px;
    line-height: 12px;
    text-align: right;
  }

  .scale .zero {
    border-color: transparent;
  }

  .indent {
    position: absolute;
    top: -2px;
    left: 91px;
  }

  .indent.right {
    top: 2px;
    left: 507px;
  }

  .ticks {
    width: 379px;
    height: 3px;
    margin: 3px 0 0 117px;
    background: repeating-linear-gradient(90deg, #747f8c 0 1px, transparent 1px 21px);
  }

  .side {
    min-height: 0;
    padding: 9px 4px 0 5px;
    overflow: hidden;
  }

  .side-ruler {
    height: 100%;
    border: solid #a9b0ba;
    border-width: 0 1px;
    background: linear-gradient(90deg, #f8fafb, #e3e9ec);
    overflow: hidden;
  }

  .side-margin {
    height: 74px;
    border-radius: 4px 4px 0 0;
    background: #94b9dd;
  }

  .side-cell {
    height: 42px;
    border-top: 1px solid #a9a9a9;
    background: linear-gradient(#555, #555) 2px 31px / 4px 1px no-repeat;
  }

  .side-cell span {
    display: block;
    width: 9px;
    height: 15px;
    color: #333;
    font-size: 9px;
    line-height: 9px;
    text-align: center;
    writing-mode: vertical-rl;
    transform: rotate(180deg);
  }

  .canvas {
    display: flex;
    justify-content: center;
    min-height: 0;
    padding: 12px 2px 0 0;
    background: linear-gradient(#c0c5d3, #aab3bf 43%, #99a2b0 68%, #98a3af);
    box-shadow: inset 3px 3px 3px -1px rgba(60, 70, 90, 0.35), inset -2px 0 2px -1px rgba(60, 70, 90, 0.3);
    overflow: hidden;
  }

  .page {
    width: 595px;
    height: 100%;
    padding: 54px 72px 0;
    background: #fff;
    box-shadow: 0 0 0 1px #8f96a2, 0 0 3px 2px rgba(90, 98, 112, 0.5);
  }

  .corners {
    display: flex;
    justify-content: space-between;
  }

  .corners i {
    width: 18px;
    height: 18px;
    border: solid #b5b5b5;
    border-width: 0 1px 1px 0;
  }

  .corners .right {
    border-width: 0 0 1px 1px;
  }

  .return {
    margin: 7px 0 0 18px;
  }

  .scrollbar {
    display: flex;
    flex-direction: column;
    grid-column: 3;
    grid-row: 1 / 3;
    background: #fafafa;
  }

  .split {
    height: 12px;
    border: 1px solid #2863b5;
    background: repeating-linear-gradient(#78aef0 0 2px, #e5f1ff 2px 3px, #5d97e0 3px 5px, #2863b5 5px 6px);
  }

  .track {
    flex: 1;
    padding: 1px 3px;
  }

  .thumb {
    width: 8px;
    height: 70%;
    margin: 0 auto;
    border-radius: 4px;
    background: #c1c1c1;
  }

  .browse {
    border: 1px solid #999;
    border-radius: 4px;
    background: linear-gradient(90deg, #fff, #d9d9d9);
  }

  .browse button {
    justify-content: center;
    width: 100%;
    height: 15px;
  }

  .browse button + button {
    border-top: 1px solid #999;
  }

  /* bottom bars */
  .bottom {
    display: flex;
    flex: none;
    height: 33px;
    background: #dcdcdc;
  }

  .views {
    padding: 5px 4px 0 3px;
    border-right: 1px solid #b5b5b5;
    background: #ececec;
  }

  .view-group {
    display: flex;
    height: 24px;
    border: 1px solid #555;
    border-radius: 3px;
    background: linear-gradient(#fcfcfc, #d4d4d4);
  }

  .view-group button {
    justify-content: center;
    width: 28px;
  }

  .view-group button + button {
    border-left: 1px solid #555;
  }

  .view-group .active {
    background: #5c5f63;
  }

  .status {
    display: flex;
    flex-direction: column;
    flex: 1;
  }

  .hscroll {
    height: 16px;
    border-top: 1px solid #ddd;
    border-bottom: 1px solid #888;
    background: #f7f7f7;
  }

  .fields {
    display: flex;
    align-items: center;
    flex: 1;
    background: linear-gradient(#efefef, #d3d3d3);
    color: #222;
  }

  .fields > span {
    display: flex;
    align-items: center;
    height: 17px;
    padding: 0 5px;
    border-right: 1px solid #999;
  }

  .fields b {
    font-weight: normal;
  }

  .f-view {
    width: 79px;
    font-size: 10px;
  }

  .f-section {
    justify-content: flex-end;
    width: 38px;
  }

  .f-pages {
    gap: 23px;
    width: 94px;
  }

  .f-pos {
    justify-content: space-between;
    width: 150px;
  }

  .f-words {
    gap: 30px;
    width: 108px;
  }

  .f-book {
    justify-content: center;
    width: 38px;
  }

  .zoom {
    display: flex;
    align-items: center;
    gap: 13px;
    margin-left: auto;
    font-size: 12px;
  }

  .zoom input {
    width: 100px;
    height: 5px;
    border: 1px solid #888;
    border-radius: 3px;
    background: #aaa;
  }

  .zoom input::-webkit-slider-thumb {
    width: 12px;
    height: 12px;
    border: 1px solid #777;
    border-radius: 50%;
    background: radial-gradient(#555 1px, #e8e8e8 3px);
    appearance: none;
  }

  .grip {
    align-self: flex-end;
    margin-left: 17px;
  }

  /* dock */
  .dock-area {
    flex: none;
    padding: 1px 39px 0;
    background:
      radial-gradient(circle at 8px 12px, #3c3836 4px, transparent 12px),
      radial-gradient(circle at 30px 18px, #77706e 2px, transparent 14px),
      radial-gradient(circle at 4px 34px, #8a8280 2px, transparent 11px),
      radial-gradient(circle at 28px 50px, #6b6463 2px, transparent 12px),
      radial-gradient(circle at calc(100% - 12px) 14px, #555968 2px, transparent 13px),
      radial-gradient(circle at calc(100% - 28px) 36px, #3f4252 2px, transparent 12px),
      radial-gradient(circle at calc(100% - 8px) 46px, #4a4d5c 2px, transparent 11px),
      linear-gradient(90deg, #2e2a29, #1c1d26);
  }

  .dock {
    display: flex;
    height: 61px;
    padding: 0 4px;
    border-radius: 4px 4px 0 0;
    background: linear-gradient(90deg, #77737f, #76727e 15%, #68656f 28%, #7b788a 50%, #788096 60%, #6f6e7b 66%, #8d92ae 76%, #74788f 88%, #66667a);
  }

  .app {
    display: flex;
    flex: 1;
    flex-direction: column;
    align-items: center;
    gap: 6px;
    padding-top: 8px;
  }

  .app svg {
    overflow: visible;
  }

  .running::after {
    width: 4px;
    height: 4px;
    border-radius: 50%;
    background: #0b0b12;
    content: '';
  }

  .divider {
    width: 1px;
    height: 45px;
    margin: 8px 10px 0;
    background: #4b4d60;
  }
</style>
